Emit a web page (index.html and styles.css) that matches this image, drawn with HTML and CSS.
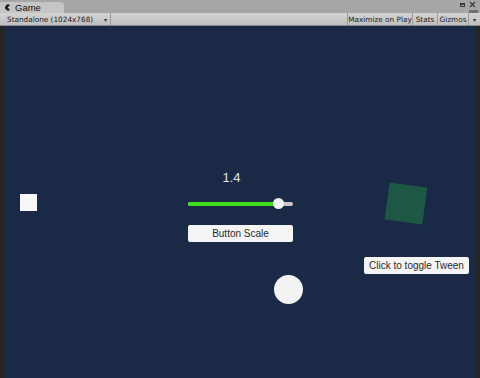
FILE: index.html
```html
<!DOCTYPE html>
<html>
<head>
<meta charset="utf-8">
<link rel="stylesheet" href="styles.css">
</head>
<body>
<div class="window">
  <div class="tabbar">
    <div class="tab">
      <svg class="tab-icon" width="7" height="7" viewBox="0 0 7 7"><path d="M6 1.2A3 3 0 1 0 6 5.8L3.6 3.5Z" fill="#1c1c1c"/></svg>
      <span>Game</span>
    </div>
    <div class="win-buttons">
      <span class="win-max"></span>
      <svg width="7" height="7" viewBox="0 0 7 7"><path d="M1 1L6 6M6 1L1 6" stroke="#3a3a3a" stroke-width="1.2"/></svg>
    </div>
    <span class="tab-menu"></span>
  </div>
  <div class="toolbar">
    <div class="tool dropdown">Standalone (1024x768)<span class="caret">▾</span></div>
    <div class="spacer"></div>
    <div class="tool t-max">Maximize on Play</div>
    <div class="tool t-stats">Stats</div>
    <div class="tool t-gizmos">Gizmos</div>
    <div class="tool caret-only"><span class="caret">▾</span></div>
  </div>
  <div class="viewport">
    <div class="scene">
      <div class="cube"></div>
      <div class="ball"></div>
      <div class="green-box"></div>
      <div class="panel">
        <div class="value">1.4</div>
        <div class="slider">
          <div class="fill" style="width:86%"></div>
          <div class="thumb" style="left:86%"></div>
        </div>
        <button class="btn btn-scale">Button Scale</button>
      </div>
      <button class="btn btn-toggle">Click to toggle Tween</button>
    </div>
  </div>
</div>
</body>
</html>
```

FILE: styles.css
```css
* { box-sizing: border-box; }
html, body { margin: 0; padding: 0; }
body {
  width: 480px;
  height: 378px;
  overflow: hidden;
  font-family: "Liberation Sans", Arial, sans-serif;
  background: #2a2a2a;
}
.window {
  display: flex;
  flex-direction: column;
  height: 378px;
}

/* tab strip */
.tabbar {
  height: 13px;
  background: #a6a6a6;
  display: flex;
  align-items: flex-end;
  position: relative;
}
.tab {
  width: 64px;
  height: 11px;
  background: #c5c5c5;
  border-radius: 0 3px 0 0;
  display: flex;
  align-items: center;
  gap: 4px;
  padding-left: 4px;
  font-size: 9.5px;
  color: #111;
}
.tab-icon { display: block; }
.win-buttons {
  position: absolute;
  top: 1px;
  right: 4px;
  display: flex;
  align-items: center;
  gap: 4px;
}
.win-max {
  width: 5px;
  height: 4px;
  border: 1px solid #3a3a3a;
  border-top-width: 2px;
}
.tab-menu {
  position: absolute;
  right: 2px;
  bottom: 0;
  width: 9px;
  height: 3px;
  background: #6e6e6e;
}

/* toolbar */
.toolbar {
  height: 13px;
  display: flex;
  background: linear-gradient(#d3d3d3, #bfbfbf);
  border-bottom: 1px solid #8a8a8a;
  font-family: "DejaVu Sans", sans-serif;
  font-size: 7.3px;
  color: #1a1a1a;
}
.tool {
  display: flex;
  align-items: center;
  justify-content: center;
  border-right: 1px solid #9d9d9d;
  white-space: nowrap;
}
.dropdown {
  width: 111px;
  justify-content: flex-start;
  padding-left: 7px;
  position: relative;
}
.caret {
  font-size: 6px;
  color: #333;
}
.dropdown .caret {
  position: absolute;
  right: 3px;
}
.spacer { flex: 1; border-right: 1px solid #9d9d9d; }
.t-max { width: 65px; }
.t-stats { width: 25px; }
.t-gizmos { width: 31px; }
.caret-only { width: 11px; border-right: none; }

/* game view */
.viewport {
  flex: 1;
  padding: 0 5px;
  background: #252526;
  display: flex;
}
.scene {
  flex: 1;
  position: relative;
  background: #1a2946;
  overflow: hidden;
}
.cube {
  position: absolute;
  left: 15px;
  top: 168px;
  width: 17px;
  height: 17px;
  background: #f7f7f9;
}
.ball {
  position: absolute;
  left: 269px;
  top: 249px;
  width: 29px;
  height: 29px;
  border-radius: 50%;
  background: #f3f3f3;
}
.green-box {
  position: absolute;
  left: 382px;
  top: 159px;
  width: 38px;
  height: 37px;
  background: #1c5844;
  transform: rotate(8deg);
}
.panel {
  position: absolute;
  left: 183px;
  top: 144px;
  width: 105px;
  display: flex;
  flex-direction: column;
  align-items: center;
}
.value {
  color: #dfe2e8;
  font-size: 13px;
  line-height: 16px;
  margin-right: 18px;
}
.slider {
  position: relative;
  width: 105px;
  height: 4px;
  margin-top: 16px;
  background: #c8c8cc;
  border-radius: 2px;
}
.fill {
  height: 4px;
  background: #43dd1c;
  border-radius: 2px;
}
.thumb {
  position: absolute;
  top: -4px;
  width: 11px;
  height: 11px;
  margin-left: -5px;
  border-radius: 50%;
  background: #f2f2f2;
}
.btn {
  font-family: "Liberation Sans", Arial, sans-serif;
  background: #f4f4f4;
  border: none;
  border-radius: 2px;
  color: #2a2a2a;
  padding: 0;
}
.btn-scale {
  width: 105px;
  height: 17px;
  margin-top: 19px;
  font-size: 10px;
}
.btn-toggle {
  position: absolute;
  left: 359px;
  top: 231px;
  width: 105px;
  height: 17px;
  font-size: 10px;
}
```
